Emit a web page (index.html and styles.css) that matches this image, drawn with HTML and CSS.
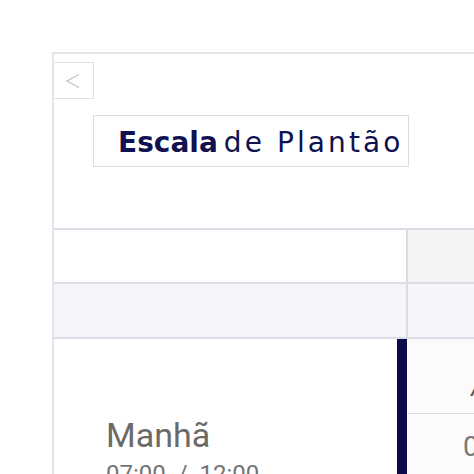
FILE: index.html
```html
<!DOCTYPE html>
<html lang="pt-BR">
<head>
<meta charset="utf-8">
<title>Escala de Plantão</title>
<link rel="stylesheet" href="styles.css">
</head>
<body>
<div class="frame">
  <header class="header">
    <button class="back" type="button" aria-label="Voltar">
      <svg width="16" height="18" viewBox="0 0 16 18"><path d="M14 2.5 L2 9 L14 15.5" fill="none" stroke="#c2c2c8" stroke-width="1.3"/></svg>
    </button>
    <div class="title"><span class="t-bold">Escala</span><span class="t-reg">de Plantão</span></div>
  </header>
  <div class="table">
    <div class="cell c-head-left"></div>
    <div class="cell c-head-right"></div>
    <div class="cell c-sub-left"></div>
    <div class="cell c-sub-right"></div>
    <div class="shift">
      <div class="shift-info">
        <div class="shift-name">Manhã</div>
        <div class="shift-time">07:00&nbsp;&nbsp;/&nbsp;&nbsp;12:00</div>
      </div>
      <div class="shift-bar"></div>
    </div>
    <div class="slots">
      <div class="slot slot-a">Ana</div>
      <div class="slot slot-b">07:00</div>
    </div>
  </div>
</div>
</body>
</html>
```

FILE: styles.css
```css
* { box-sizing: border-box; }
html, body { margin: 0; padding: 0; background: #ffffff; overflow: hidden; }
body { width: 474px; height: 474px; font-family: Roboto, "Liberation Sans", sans-serif; }

.frame {
  margin: 52px 0 0 52px;
  border-top: 2px solid #e4e4ec;
  border-left: 2px solid #e4e4ec;
  height: 422px;
  overflow: hidden;
}

.header {
  height: 174px;
  padding-top: 8px;
  display: flex;
  flex-direction: column;
  align-items: flex-start;
}

.back {
  margin-left: -2px;
  width: 42px;
  height: 37px;
  border: 1.5px solid #e0e0e6;
  background: #ffffff;
  display: flex;
  align-items: center;
  justify-content: center;
  padding: 0 1px 0 0;
}

.title {
  margin-top: 16px;
  margin-left: 39px;
  width: 316px;
  height: 52px;
  border: 1.5px solid #dcdcdf;
  padding-left: 24px;
  padding-top: 2px;
  display: flex;
  align-items: center;
  color: #0f1150;
  font-family: "DejaVu Sans", sans-serif;
  font-size: 28px;
  white-space: nowrap;
}
.t-bold { font-weight: 700; margin-right: 6px; }
.t-reg { font-weight: 400; letter-spacing: 3.1px; }

.table {
  display: grid;
  grid-template-columns: 354px 1fr;
  grid-template-rows: 54px 55px 1fr;
  border-top: 2px solid #dcdce6;
  height: 248px;
}

.cell { border-bottom: 2px solid #dcdce4; }
.c-head-left { background: #ffffff; border-right: 2px solid #dcdce4; }
.c-head-right { background: #f5f3f6; }
.c-sub-left { background: #f5f6f9; border-right: 2px solid #dcdce4; }
.c-sub-right { background: #f5f6f9; }

.shift {
  display: flex;
  background: #ffffff;
}
.shift-info {
  flex: 1;
  padding: 79px 0 0 52px;
}
.shift-name {
  font-size: 34px;
  line-height: 34px;
  color: #6a6a6a;
}
.shift-time {
  font-size: 24px;
  line-height: 44px;
  color: #747474;
  white-space: nowrap;
}
.shift-bar {
  width: 10px;
  margin-right: 1px;
  background: #0b0c4c;
}

.slots {
  display: flex;
  flex-direction: column;
  background: #fbfbfc;
}
.slot { white-space: nowrap; }
.slot-a {
  height: 75px;
  border-bottom: 1.5px solid #dcdce4;
  padding: 36px 0 0 63px;
  font-size: 25px;
  line-height: 25px;
  font-style: italic;
  color: #5a5a5a;
}
.slot-b {
  padding: 19px 0 0 55px;
  font-size: 28px;
  line-height: 28px;
  color: #777777;
}
```
